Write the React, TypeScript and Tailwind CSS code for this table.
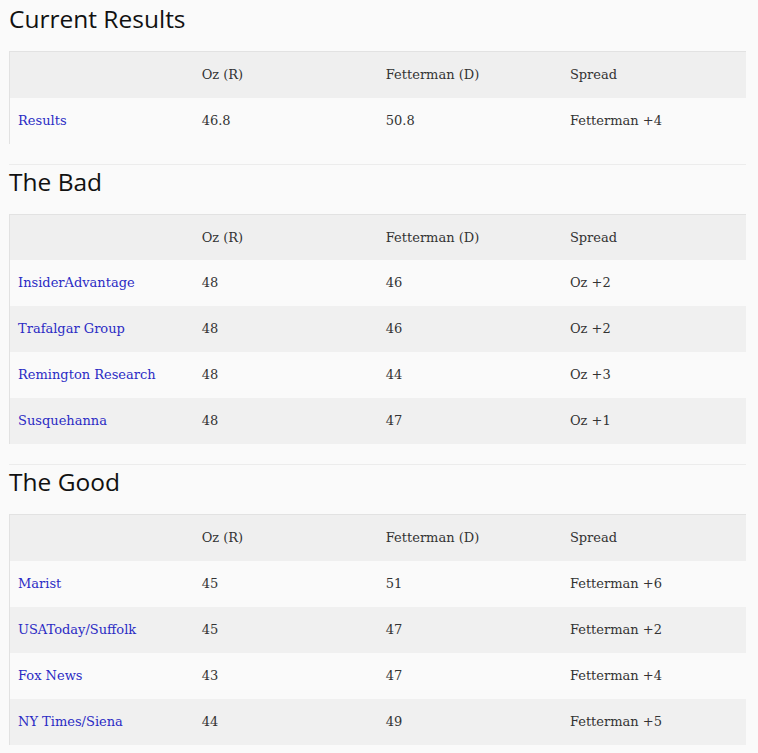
import React from 'react';

interface PollRow {
  name: string;
  oz: string;
  fetterman: string;
  spread: string;
}

interface Section {
  title: string;
  rows: PollRow[];
}

const sections: Section[] = [
  {
    title: 'Current Results',
    rows: [{ name: 'Results', oz: '46.8', fetterman: '50.8', spread: 'Fetterman +4' }],
  },
  {
    title: 'The Bad',
    rows: [
      { name: 'InsiderAdvantage', oz: '48', fetterman: '46', spread: 'Oz +2' },
      { name: 'Trafalgar Group', oz: '48', fetterman: '46', spread: 'Oz +2' },
      { name: 'Remington Research', oz: '48', fetterman: '44', spread: 'Oz +3' },
      { name: 'Susquehanna', oz: '48', fetterman: '47', spread: 'Oz +1' },
    ],
  },
  {
    title: 'The Good',
    rows: [
      { name: 'Marist', oz: '45', fetterman: '51', spread: 'Fetterman +6' },
      { name: 'USAToday/Suffolk', oz: '45', fetterman: '47', spread: 'Fetterman +2' },
      { name: 'Fox News', oz: '43', fetterman: '47', spread: 'Fetterman +4' },
      { name: 'NY Times/Siena', oz: '44', fetterman: '49', spread: 'Fetterman +5' },
    ],
  },
];

const serif = "font-['DejaVu_Serif',serif]";

const PollTable = ({ rows }: { rows: PollRow[] }) => (
  <table className={`w-full table-fixed border-collapse border-l border-t border-[#e2e2e2] text-[13px] text-[#333] ${serif}`}>
    <thead>
      <tr className="h-[46px] bg-[#efefef]">
        <th className="px-2 text-left font-normal"></th>
        <th className="px-2 text-left font-normal">Oz (R)</th>
        <th className="px-2 text-left font-normal">Fetterman (D)</th>
        <th className="px-2 text-left font-normal">Spread</th>
      </tr>
    </thead>
    <tbody>
      {rows.map((row, i) => (
        <tr key={row.name} className={i % 2 === 1 ? 'h-[46px] bg-[#f0f0f0]' : 'h-[46px] bg-[#fafafa]'}>
          <td className="px-2">
            <a href="#" className="text-[#2b2bc4]">{row.name}</a>
          </td>
          <td className="px-2">{row.oz}</td>
          <td className="px-2">{row.fetterman}</td>
          <td className="px-2">{row.spread}</td>
        </tr>
      ))}
    </tbody>
  </table>
);

export default function App() {
  return (
    <div className="min-h-screen bg-[#fafafa] pl-[9px] pr-[12px]">
      {sections.map((section, i) => (
        <div key={section.title}>
          {i > 0 && <hr className="mt-[20px] border-t border-[#ececec]" />}
          <h2
            className={`${i === 0 ? 'pt-[2px]' : 'pt-0'} pb-[15px] font-['Open_Sans',sans-serif] text-[24.5px] leading-[34px] text-[#111]`}
          >
            {section.title}
          </h2>
          <PollTable rows={section.rows} />
        </div>
      ))}
    </div>
  );
}
